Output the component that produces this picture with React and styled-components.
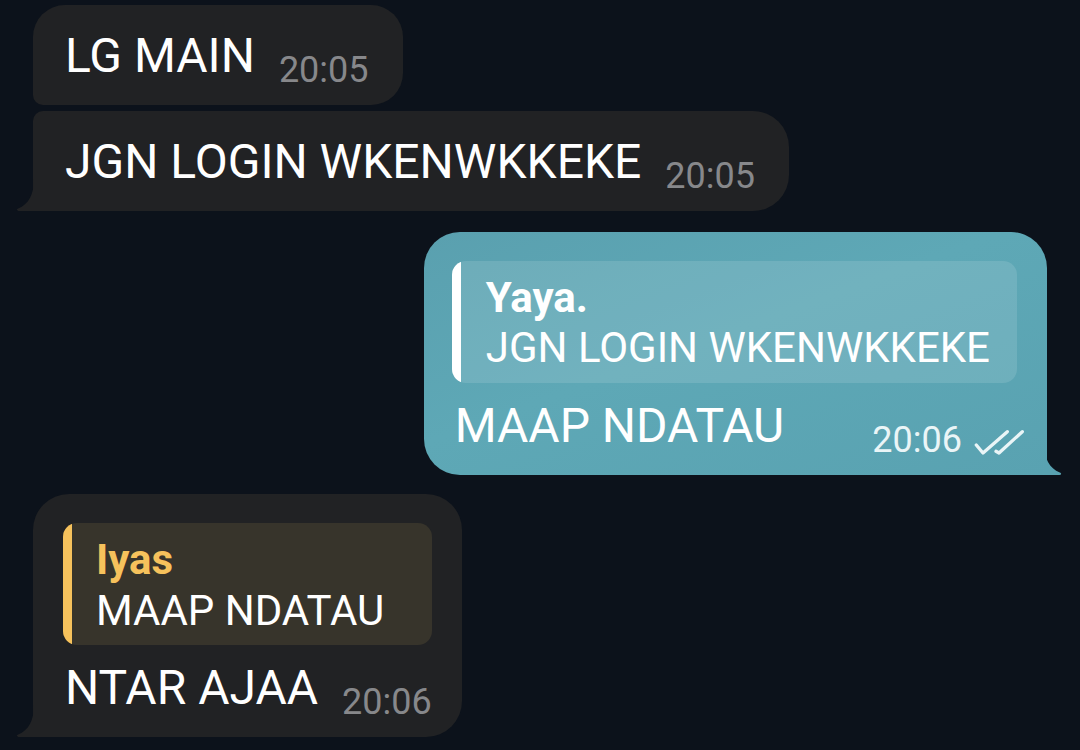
import React from 'react';
import styled, { createGlobalStyle } from 'styled-components';

const GlobalStyle = createGlobalStyle`
  html, body {
    margin: 0;
    padding: 0;
    background: #0c121b;
  }
  body {
    font-family: Roboto, "Noto Sans", sans-serif;
  }
`;

const Page = styled.div`
  width: 1080px;
  height: 750px;
  overflow: hidden;
  box-sizing: border-box;
  padding: 5px 33px 0 33px;
  display: flex;
  flex-direction: column;
  background: #0c121b;
`;

const Row = styled.div`
  display: flex;
  justify-content: ${p => (p.$out ? 'flex-end' : 'flex-start')};
  margin-top: ${p => p.$gap || 0}px;
`;

const OUT_BG = '#59a2b1';
const IN_BG = '#212224';

const Bubble = styled.div`
  position: relative;
  display: flex;
  flex-direction: column;
  background: ${p => (p.$out ? `linear-gradient(160deg, #5aa0af 0%, #5ea8b6 45%, ${OUT_BG} 100%)` : IN_BG)};
  border-radius: ${p => p.$radius};
  padding: ${p => p.$pad};
`;

const Tail = styled.svg`
  position: absolute;
  bottom: 0;
  ${p => (p.$out ? 'right: -15px; transform: scaleX(-1);' : 'left: -17px;')}
`;

const Line = styled.div`
  display: flex;
  align-items: flex-end;
  justify-content: space-between;
  gap: ${p => p.$gap || 24}px;
  padding-left: ${p => p.$indent || 0}px;
`;

const Text = styled.span`
  font-size: 48px;
  line-height: 56px;
  color: #ffffff;
  margin-bottom: 7px;
  white-space: nowrap;
`;

const Meta = styled.span`
  display: flex;
  align-items: center;
  gap: 11px;
`;

const Time = styled.span`
  font-size: 36px;
  line-height: 42px;
  color: ${p => (p.$out ? '#eaf5f7' : '#87888b')};
  white-space: nowrap;
`;

const Quote = styled.div`
  display: flex;
  border-radius: 14px;
  overflow: hidden;
  background: ${p => p.$bg};
  margin: ${p => p.$margin || '0 0 15px 0'};
`;

const QuoteBar = styled.div`
  width: 9px;
  flex-shrink: 0;
  background: ${p => p.$color};
`;

const QuoteBody = styled.div`
  padding: ${p => p.$pad || '11px 26px 10px 24px'};
  display: flex;
  flex-direction: column;
`;

const QuoteName = styled.span`
  font-size: 42px;
  line-height: ${p => p.$lh || 50}px;
  font-weight: 700;
  color: ${p => p.$color};
`;

const QuoteText = styled.span`
  font-size: 42px;
  line-height: ${p => p.$lh || 50}px;
  color: #ffffff;
  white-space: nowrap;
`;

const TailShape = ({ out, color }) => (
  <Tail $out={out} width="18" height="32" viewBox="0 0 18 32">
    <path d="M18 0 C18 15 12.5 25.5 2.2 29.6 C0.2 30.4 0.6 32 2.4 32 L18 32 Z" fill={color} />
  </Tail>
);

const DoubleCheck = () => (
  <svg width="52" height="30" viewBox="0 0 52 30" fill="none" stroke="#eaf5f7" strokeWidth="3.3" strokeLinecap="round" strokeLinejoin="round">
    <path d="M3.3 20 L10 28 L34.3 6.7" />
    <path d="M23 26.3 L26 28 L49.3 6.7" />
  </svg>
);

export default function App() {
  return (
    <>
      <GlobalStyle />
      <Page>
        <Row>
          <Bubble $radius="32px 32px 32px 10px" $pad="23px 34px 14px 32px">
            <Line>
              <Text>LG MAIN</Text>
              <Time>20:05</Time>
            </Line>
          </Bubble>
        </Row>

        <Row $gap={6}>
          <Bubble $radius="10px 36px 36px 0" $pad="23px 34px 14px 32px">
            <Line>
              <Text>JGN LOGIN WKENWKKEKE</Text>
              <Time>20:05</Time>
            </Line>
            <TailShape color={IN_BG} />
          </Bubble>
        </Row>

        <Row $out $gap={21}>
          <Bubble $out $radius="36px 36px 0 36px" $pad="29px 22px 14px 28px">
            <Quote $bg="rgba(255,255,255,0.12)" $margin="0 8px 15px 0">
              <QuoteBar $color="#ffffff" />
              <QuoteBody $pad="12px 27px 10px 25px">
                <QuoteName $color="#ffffff">Yaya.</QuoteName>
                <QuoteText>JGN LOGIN WKENWKKEKE</QuoteText>
              </QuoteBody>
            </Quote>
            <Line $indent={3}>
              <Text>MAAP NDATAU</Text>
              <Meta>
                <Time $out>20:06</Time>
                <DoubleCheck />
              </Meta>
            </Line>
            <TailShape out color={OUT_BG} />
          </Bubble>
        </Row>

        <Row $gap={19}>
          <Bubble $radius="36px 36px 36px 0" $pad="29px 30px 14px 30px">
            <Quote $bg="#37342b">
              <QuoteBar $color="#f6c25c" />
              <QuoteBody $pad="11px 26px 9px 24px">
                <QuoteName $color="#f6c25c" $lh={51}>Iyas</QuoteName>
                <QuoteText $lh={51}>MAAP NDATAU</QuoteText>
              </QuoteBody>
            </Quote>
            <Line $gap={24} $indent={2}>
              <Text>NTAR AJAA</Text>
              <Time>20:06</Time>
            </Line>
            <TailShape color={IN_BG} />
          </Bubble>
        </Row>
      </Page>
    </>
  );
}
